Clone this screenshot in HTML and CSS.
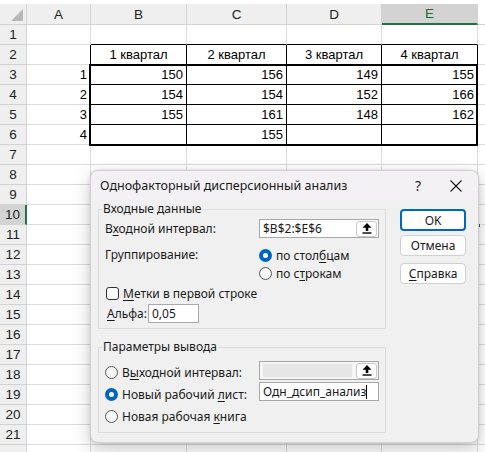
FILE: index.html
```html
<!DOCTYPE html>
<html lang="ru">
<head>
<meta charset="utf-8">
<title>Однофакторный дисперсионный анализ</title>
<link rel="stylesheet" href="styles.css">
</head>
<body>
<div class="page">
  <div class="sheetwrap">
  <div class="sheet">
    <div class="hd corner"><svg width="12" height="12" viewBox="0 0 12 12"><polygon points="12,0 12,12 0,12" fill="#b8b8b8"/></svg></div>
    <div class="hd col">A</div>
    <div class="hd col">B</div>
    <div class="hd col">C</div>
    <div class="hd col">D</div>
    <div class="hd col sel-col">E</div>
    <div class="hd blank"></div>

    <div class="hd row">1</div>
    <div class="c"></div><div class="c bb"></div><div class="c bb"></div><div class="c bb"></div><div class="c bb"></div><div class="c end"></div>

    <div class="hd row">2</div>
    <div class="c br"></div><div class="c bk t-c">1 квартал</div><div class="c bk t-c">2 квартал</div><div class="c bk t-c">3 квартал</div><div class="c bk t-c">4 квартал</div><div class="c end"></div>

    <div class="hd row">3</div>
    <div class="c num">1</div><div class="c bk num">150</div><div class="c bk num">156</div><div class="c bk num">149</div><div class="c bk num">155</div><div class="c end"></div>

    <div class="hd row">4</div>
    <div class="c num">2</div><div class="c bk num">154</div><div class="c bk num">154</div><div class="c bk num">152</div><div class="c bk num">166</div><div class="c end"></div>

    <div class="hd row">5</div>
    <div class="c num">3</div><div class="c bk num">155</div><div class="c bk num">161</div><div class="c bk num">148</div><div class="c bk num">162</div><div class="c end"></div>

    <div class="hd row">6</div>
    <div class="c num">4</div><div class="c bk num"></div><div class="c bk num">155</div><div class="c bk num"></div><div class="c bk num"></div><div class="c end"></div>

    <div class="hd row">7</div><div class="c"></div><div class="c"></div><div class="c"></div><div class="c"></div><div class="c"></div><div class="c end"></div>
    <div class="hd row">8</div><div class="c"></div><div class="c"></div><div class="c"></div><div class="c"></div><div class="c"></div><div class="c end"></div>
    <div class="hd row">9</div><div class="c"></div><div class="c"></div><div class="c"></div><div class="c"></div><div class="c"></div><div class="c end"></div>
    <div class="hd row sel-row">10</div><div class="c"></div><div class="c"></div><div class="c"></div><div class="c"></div><div class="c"></div><div class="c end"></div>
    <div class="hd row">11</div><div class="c"></div><div class="c"></div><div class="c"></div><div class="c"></div><div class="c"></div><div class="c end"></div>
    <div class="hd row">12</div><div class="c"></div><div class="c"></div><div class="c"></div><div class="c"></div><div class="c"></div><div class="c end"></div>
    <div class="hd row">13</div><div class="c"></div><div class="c"></div><div class="c"></div><div class="c"></div><div class="c"></div><div class="c end"></div>
    <div class="hd row">14</div><div class="c"></div><div class="c"></div><div class="c"></div><div class="c"></div><div class="c"></div><div class="c end"></div>
    <div class="hd row">15</div><div class="c"></div><div class="c"></div><div class="c"></div><div class="c"></div><div class="c"></div><div class="c end"></div>
    <div class="hd row">16</div><div class="c"></div><div class="c"></div><div class="c"></div><div class="c"></div><div class="c"></div><div class="c end"></div>
    <div class="hd row">17</div><div class="c"></div><div class="c"></div><div class="c"></div><div class="c"></div><div class="c"></div><div class="c end"></div>
    <div class="hd row">18</div><div class="c"></div><div class="c"></div><div class="c"></div><div class="c"></div><div class="c"></div><div class="c end"></div>
    <div class="hd row">19</div><div class="c"></div><div class="c"></div><div class="c"></div><div class="c"></div><div class="c"></div><div class="c end"></div>
    <div class="hd row">20</div><div class="c"></div><div class="c"></div><div class="c"></div><div class="c"></div><div class="c"></div><div class="c end"></div>
    <div class="hd row">21</div><div class="c"></div><div class="c"></div><div class="c"></div><div class="c"></div><div class="c"></div><div class="c end"></div>
    <div class="hd row"></div><div class="c"></div><div class="c"></div><div class="c"></div><div class="c"></div><div class="c"></div><div class="c end"></div>
  </div>
  <div class="sheet overlay">
    <div class="thick"></div>
    <div class="active"><span class="handle"></span></div>
  </div>
  </div>

  <div class="dialog">
    <div class="titlebar">
      <span class="title">Однофакторный дисперсионный анализ</span>
      <span class="help">?</span>
      <span class="close"><svg width="12" height="12" viewBox="0 0 12 12"><path d="M0.5 0.5 L11.5 11.5 M11.5 0.5 L0.5 11.5" stroke="#1a1a1a" stroke-width="1.1" fill="none"/></svg></span>
    </div>
    <div class="dbody">
      <div class="groups">
        <fieldset class="group g1">
          <legend>Входные данные</legend>
          <div class="frow r-input">
            <span class="lbl">В<u>х</u>одной интервал:</span>
            <span class="field"><span class="ftext">$B$2:$E$6</span><span class="pick"><svg width="10" height="11" viewBox="0 0 10 11"><path d="M5 0 L9.5 4.8 L6.3 4.8 L6.3 8 L3.7 8 L3.7 4.8 L0.5 4.8 Z" fill="#000"/><rect x="0.5" y="9.3" width="9" height="1.4" fill="#000"/></svg></span></span>
          </div>
          <div class="frow r-group">
            <span class="lbl">Группирование:</span>
            <div class="radios">
              <span class="opt"><span class="radio on"></span><span>по стол<u>б</u>цам</span></span>
              <span class="opt"><span class="radio"></span><span>по с<u>т</u>рокам</span></span>
            </div>
          </div>
          <div class="frow r-check">
            <span class="opt"><span class="check"></span><span><u>М</u>етки в первой строке</span></span>
          </div>
          <div class="frow r-alpha">
            <span class="lbl"><u>А</u>льфа:</span>
            <span class="field small"><span class="ftext">0,05</span></span>
          </div>
        </fieldset>

        <fieldset class="group g2">
          <legend>Параметры вывода</legend>
          <div class="outcols">
            <div class="outradios">
              <span class="opt"><span class="radio"></span><span>В<u>ы</u>ходной интервал:</span></span>
              <span class="opt"><span class="radio on"></span><span>Новый рабочий <u>л</u>ист:</span></span>
              <span class="opt"><span class="radio"></span><span>Новая рабочая <u>к</u>нига</span></span>
            </div>
            <div class="outfields">
              <span class="field disabled"><span class="ftext"><span class="grey"></span></span><span class="pick"><svg width="10" height="11" viewBox="0 0 10 11"><path d="M5 0 L9.5 4.8 L6.3 4.8 L6.3 8 L3.7 8 L3.7 4.8 L0.5 4.8 Z" fill="#000"/><rect x="0.5" y="9.3" width="9" height="1.4" fill="#000"/></svg></span></span>
              <span class="field"><span class="ftext">Одн_дсип_анализ<span class="caret"></span></span></span>
            </div>
          </div>
        </fieldset>
      </div>
      <div class="buttons">
        <span class="btn default">OK</span>
        <span class="btn">Отмена</span>
        <span class="btn help-btn"><span><u>С</u>правка</span></span>
      </div>
    </div>
  </div>
</div>
</body>
</html>
```
FILE: styles.css
```css
* { box-sizing: border-box; }
html, body { margin: 0; padding: 0; background: #fff; }
.page {
  position: relative;
  width: 485px;
  height: 452px;
  overflow: hidden;
  padding-top: 4px;
  font-family: "Liberation Sans", Arial, sans-serif;
}
.sheetwrap { position: relative; }
.sheet {
  display: grid;
  grid-template-columns: 27px 64px 96px 100px 95px 96px 1fr;
  grid-template-rows: 21px;
  grid-auto-rows: 20px;
  font-size: 13px;
  color: #000;
}
.sheet.overlay {
  position: absolute;
  inset: 0;
  pointer-events: none;
}
.hd {
  background: #efefef;
  border-right: 1px solid #d2d2d2;
  border-bottom: 1px solid #d2d2d2;
  display: flex;
  align-items: center;
  justify-content: center;
  color: #222;
  font-size: 13.5px;
}
.hd.corner { justify-content: flex-end; align-items: flex-end; padding: 0 3px 3px 0; }
.hd.blank { background: #fff; border-right: none; border-bottom: 1px solid #d2d2d2; }
.hd.sel-col { background: #d3d3d3; color: #1d6b3c; border-bottom: 2px solid #217346; }
.hd.sel-row { background: #d3d3d3; border-right: 2px solid #217346; }
.c {
  border-right: 1px solid #dcdcdc;
  border-bottom: 1px solid #dcdcdc;
  display: flex;
  align-items: center;
  white-space: nowrap;
  padding: 0 3px;
  overflow: hidden;
}
.c.end { border-right: none; }
.c.bb { border-bottom-color: #000; }
.c.br { border-right-color: #000; }
.c.bk { border-right-color: #000; border-bottom-color: #000; }
.t-c { justify-content: center; }
.num { justify-content: flex-end; }
.thick {
  grid-column: 3 / 7;
  grid-row: 4 / 8;
  margin: -1px 0 -1px -2px;
  border: 2px solid #000;
}
.active {
  grid-column: 6 / 7;
  grid-row: 11 / 12;
  margin: -1px -1px -1px -2px;
  border: 2px solid #217346;
  position: relative;
}
.handle {
  position: absolute;
  right: -4px;
  bottom: -4px;
  width: 5px;
  height: 5px;
  background: #217346;
  border: 1px solid #fff;
}

/* Dialog */
.dialog {
  position: absolute;
  left: 90px;
  top: 170px;
  width: 389px;
  height: 273px;
  background: #f0f0f0;
  border: 1px solid #cfcfcf;
  border-radius: 8px;
  box-shadow: 0 6px 18px rgba(0,0,0,0.22), 0 0 3px rgba(0,0,0,0.12);
  overflow: hidden;
  font-family: "Noto Sans", "Open Sans", sans-serif;
  font-size: 12px;
  color: #1a1a1a;
  display: flex;
  flex-direction: column;
}
.titlebar {
  height: 29px;
  background: #f4f1f5;
  display: flex;
  align-items: center;
  padding-left: 9px;
  flex: none;
}
.title { flex: 1; font-size: 12.5px; }
.help { width: 20px; text-align: center; font-size: 14px; margin-right: 22px; }
.close { width: 12px; margin-right: 16px; display: flex; }
.dbody {
  display: flex;
  padding: 0 12px 0 7px;
  gap: 14px;
}
.groups { width: 289px; display: flex; flex-direction: column; }
.group {
  margin: 0;
  border: 1px solid #dcdcdc;
  padding: 0;
  min-width: 0;
}
.group legend {
  padding: 0 1px;
  margin-left: 3px;
  line-height: 16px;
  color: #1a1a1a;
}
.g1 { padding: 2px 0 5px 0; margin-top: 1px; }
.g2 { padding: 6px 0 7px 0; margin-top: 10px; }
.frow { display: flex; align-items: center; }
.lbl { display: inline-block; }
.r-input { height: 19px; }
.r-input .lbl { width: 154px; margin-left: 6px; }
.r-group { align-items: flex-start; margin-top: 8px; }
.r-group .lbl { width: 154px; margin-left: 6px; line-height: 18px; }
.radios { display: flex; flex-direction: column; }
.opt { display: flex; align-items: center; height: 18px; white-space: nowrap; }
.radio {
  width: 13px;
  height: 13px;
  border-radius: 50%;
  border: 1px solid #555;
  background: #f7f7f7;
  margin-right: 4px;
  flex: none;
}
.radio.on {
  border: 4px solid #0067c0;
  background: #fff;
}
.r-check { margin-top: 2px; padding-left: 7px; }
.check {
  width: 13px;
  height: 13px;
  border: 1px solid #333;
  border-radius: 3px;
  background: #fafafa;
  margin-right: 4px;
  flex: none;
}
.r-alpha { margin-top: 2px; height: 19px; }
.r-alpha .lbl { margin-left: 8px; width: 41px; }
.field {
  display: flex;
  align-items: center;
  width: 120px;
  height: 19px;
  background: #fff;
  border: 1px solid #a8a8a8;
  padding: 0 1px 0 3px;
}
.field.small { width: 51px; }
.ftext { flex: 1; white-space: nowrap; overflow: hidden; display: flex; align-items: center; }
.caret { display: inline-block; width: 1px; height: 14px; background: #000; }
.pick {
  width: 21px;
  height: 16px;
  border: 1px solid #c9c9c9;
  border-radius: 3px;
  background: #fff;
  display: flex;
  align-items: center;
  justify-content: center;
  flex: none;
}
.field.disabled { background: #f5f5f5; }
.grey { display: block; width: 89px; height: 13px; background: #e6e6e6; }
.outcols { display: flex; }
.outradios { display: flex; flex-direction: column; gap: 4px; padding-left: 6px; margin-top: 2px; width: 160px; }
.outfields { display: flex; flex-direction: column; gap: 2px; }
.buttons { display: flex; flex-direction: column; margin-top: 9px; width: 66px; }
.btn {
  height: 21px;
  border: 1px solid #d0d0d0;
  border-radius: 4px;
  background: #fdfdfd;
  display: flex;
  align-items: center;
  justify-content: center;
}
.btn.default { height: 22px; border: 2px solid #0067c0; margin-bottom: 4px; }
.btn.help-btn { margin-top: 7px; }
u { text-decoration-thickness: 1px; text-underline-offset: 2px; }
```
